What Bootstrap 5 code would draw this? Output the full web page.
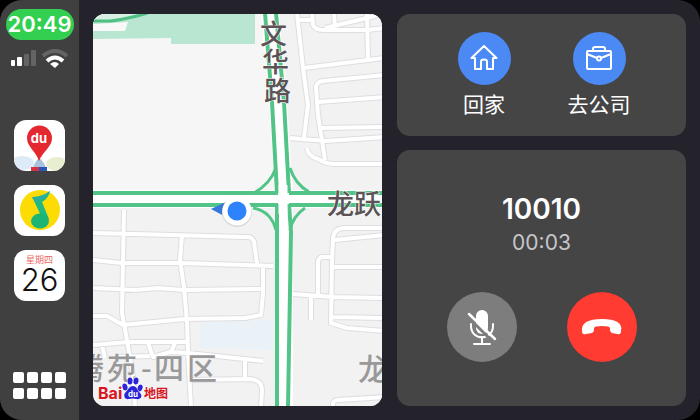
<!DOCTYPE html>
<html lang="zh-CN">
<head>
<meta charset="utf-8">
<meta name="viewport" content="width=device-width, initial-scale=1">
<title>CarPlay</title>
<link href="https://cdn.jsdelivr.net/npm/bootstrap@5.3.0/dist/css/bootstrap.min.css" rel="stylesheet">
<style>
  body { background: #000; font-family: Inter, "Noto Sans CJK SC", sans-serif; }
  .shell { background: #24232b; border-radius: 22px; overflow: hidden; }
  .dock { width: 79px; background: #404041; padding: 9px 0 21px; }
  .clock { width: 68px; height: 31px; border-radius: 16px; background: #32cf50; color: #fff; font-size: 22px; line-height: 31px; font-weight: 600; text-align: center; }
  .signals { height: 20px; margin-top: 5px; margin-bottom: 55px; }
  .apps { gap: 14px; }
  .app-tile { width: 51px; height: 51px; border-radius: 12px; background: #fff; overflow: hidden; }
  .app-tile svg { display: block; }
  .weekday { font-size: 9px; line-height: 12px; color: #ea6a67; padding-top: 4px; }
  .monthday { font-size: 31px; line-height: 28px; font-weight: 300; color: #111; }
  .deck { padding: 14px; gap: 15px; }
  .pane { flex: 1 1 0; min-width: 0; }
  .side { gap: 14px; }
  .map { border-radius: 12px; overflow: hidden; background: #f3f3f4; position: relative; }
  .map svg { position: absolute; inset: 0; width: 100%; height: 100%; }
  .map text { font-family: "Noto Sans CJK SC", sans-serif; }
  .panel { background: #454546; border-radius: 13px; color: #fff; }
  .places { padding: 18px 0; }
  .place { width: 115px; }
  .place-disc { width: 53px; height: 53px; background: #4b89f5; }
  .place-name { font-family: "Noto Sans CJK SC", sans-serif; font-size: 21px; line-height: 30px; margin-top: 3px; }
  .caller { font-size: 28px; line-height: 34px; font-weight: 600; margin-top: 42px; }
  .timer { font-size: 21px; line-height: 30px; color: #c6c6c7; margin-top: 2px; }
  .call-actions { gap: 50px; margin-top: 34px; }
  .round { width: 70px; height: 70px; }
  .mute { background: #7d7d7d; }
  .hangup { background: #ff3b32; }
</style>
<script src="https://cdn.jsdelivr.net/npm/bootstrap@5.3.0/dist/js/bootstrap.bundle.min.js"></script>
</head>
<body>
<div class="shell d-flex min-vh-100">
  <nav class="dock flex-shrink-0 d-flex flex-column align-items-center" aria-label="程序坞">
    <div class="clock">20:49</div>
    <div class="signals">
      <svg width="60" height="20" viewBox="10 45 60 20" aria-hidden="true">
        <g fill="#fff"><rect x="11" y="56" width="4" height="6" rx="1"/><rect x="17" y="53" width="5" height="9" rx="1"/></g>
        <g fill="#646465"><rect x="24" y="50" width="5" height="12" rx="1"/><rect x="31" y="46" width="5" height="16" rx="1"/></g>
        <g fill="none" stroke-width="4"><path d="M43 52Q55 42 67 52" stroke="#646465"/><path d="M47 57Q55 50 63 57" stroke="#fff"/></g>
        <path d="M50 60Q55 56 59 60L55 64Z" fill="#fff"/>
      </svg>
    </div>
    <div class="apps d-flex flex-column">
      <button type="button" class="app-tile btn border-0 p-0" aria-label="百度地图">
        <svg width="51" height="51" viewBox="0 0 51 51">
          <ellipse cx="8" cy="43" rx="12" ry="7" fill="#dcebf7"/><ellipse cx="43" cy="44" rx="11" ry="7" fill="#e8efd0"/>
          <path d="M25 38Q20 42 18 51H33Q31 42 25 38Z" fill="#a7c4dc"/>
          <path d="M17 47H25V51H17Z" fill="#d63145"/><path d="M25 47H33V51H25Z" fill="#2c56b5"/>
          <path d="M25 41C22 31 13 27 13 18A12.500 12.500 0 0 1 38 18C38 27 29 31 25 41Z" fill="#e32830"/>
          <text x="25" y="23" text-anchor="middle" font-size="13" font-weight="700" fill="#fff">du</text>
        </svg>
      </button>
      <button type="button" class="app-tile btn border-0 p-0" aria-label="QQ音乐">
        <svg width="51" height="51" viewBox="0 0 51 51">
          <circle cx="26" cy="25" r="20" fill="#fddc05"/>
          <path d="M18 12Q28 12 36 6Q35 13 28 17L35 34L30 37L20 16Z" fill="#20b883"/>
          <path d="M18 12Q28 12 36 6Q33 15 21 17Z" fill="#2cae9c"/>
          <ellipse cx="26" cy="36" rx="9" ry="7.500" fill="#1cb574"/>
        </svg>
      </button>
      <button type="button" class="app-tile btn border-0 p-0 d-flex flex-column align-items-center" aria-label="日历">
        <span class="weekday">星期四</span>
        <span class="monthday">26</span>
      </button>
    </div>
    <button type="button" class="btn border-0 p-0 mt-auto d-flex" aria-label="主屏幕">
      <svg width="53" height="27" viewBox="0 0 53 27" fill="#fff">
        <g id="dots"><rect width="11" height="11" rx="2"/><rect x="14" width="11" height="11" rx="2"/><rect x="28" width="11" height="11" rx="2"/><rect x="42" width="11" height="11" rx="2"/></g>
        <use href="#dots" y="16"/>
      </svg>
    </button>
  </nav>

  <main class="deck flex-grow-1 d-flex">
    <section class="pane map" aria-label="地图">
      <svg viewBox="93 14 289 392" preserveAspectRatio="xMidYMid slice">
        <defs>
          <path id="streets" d="M297 13L303 68L308 105L304 138M298 20H312M312 13L313 25Q315 30 323 30H367L384 28M325 28L367 18L384 13M334 13L335 28M367 13L368 60M304 68L384 58M384 75L323 81Q316 82 316 88L318 115L325 160M318 102L384 97M320 128L384 127M290 138L326 141L384 137M307 148Q308 156 318 159Q326 164 335 164H384
          M384 228H343Q334 229 333 238L332 260L331 323L347 328L384 331M334 240L384 235M332 257H322Q318 258 318 263V294M332 267H384M293 294L333 297L384 298M311 297V320M332 317L384 318M333 407Q332 400 338 400L384 397
          M92 233L135 234L245 237Q252 236 254 242L257 264M92 260L122 263H182L245 265L273 266M92 288L135 290L158 288L184 290L262 289M263 267V293L261 315L245 318L185 319L123 325L107 316H92M124 210L122 313L127 340L133 377L135 407M182 235L180 260L184 287L187 323L188 350L191 407M92 345L128 342H188M148 343L153 357L170 352L188 353L263 361M175 343L171 352M102 345L105 358M245 361V379M191 380L250 379Q262 380 262 390L261 407M118 357L150 356"/>
        </defs>
        <rect x="93" y="14" width="289" height="392" fill="#f2f2f3"/>
        <path d="M93 14H273L277 191H93Z" fill="#f6f6f6"/>
        <path d="M93 14H255V44H171V38L93 39Z" fill="#b9e6d0"/>
        <path d="M93 14H150L112 20H93Z" fill="#d9efe4"/>
        <path d="M93 24L128 22L125 31H93Z" fill="#f8f8f8"/>
        <path d="M92 21H110Q122 20 148 13" fill="none" stroke="#50c084" stroke-width="3"/>
        <path d="M200 322L263 320L273 318V350L200 348Z" fill="#eaf2f8"/>
        <g fill="none" stroke-linejoin="round">
          <use href="#streets" stroke="#dedee0" stroke-width="6"/>
          <use href="#streets" stroke="#fff" stroke-width="4"/>
          <path d="M270 13L278 102L284 193V407" stroke="#fff" stroke-width="18"/>
          <path d="M92 199H383" stroke="#fff" stroke-width="18"/>
          <g stroke="#53c487" stroke-width="3">
            <path d="M276 168Q270 184 254 193M290 168Q295 184 309 192M253 208Q271 211 276 230M305 208Q293 216 290 230"/>
            <g stroke-width="4"><path d="M265 13L272 102L277 193M276 13L284 102L289 193M92 193H278M289 193H383M92 205H278M289 205H383M277 204V407M289 204L291 232L288 407"/></g>
          </g>
          <path d="M283 185V214" stroke="#fff" stroke-width="9"/>
        </g>
        <g fill="#5b5355" stroke="#fff" stroke-width="1" paint-order="stroke" font-size="27" font-weight="500">
          <text x="260" y="44">文</text><text x="262" y="72">华</text><text x="264" y="101">路</text>
          <text x="327" y="214">龙跃</text>
        </g>
        <g fill="#999" font-size="30" font-weight="500">
          <text x="74 107 141 154 187" y="379">腾苑-四区</text>
          <text x="358" y="380">龙</text>
        </g>
        <path d="M211 209L226 202V217Z" fill="#3577db"/>
        <circle cx="237" cy="212" r="15" fill="#d5d5d8"/>
        <circle cx="237" cy="211" r="14.500" fill="#fff"/>
        <circle cx="237" cy="211" r="9.500" fill="#2f83fa"/>
        <g fill="#d8161d">
          <text x="98" y="399" font-size="16" font-weight="700" style="font-family:Inter,sans-serif">Bai</text>
          <text x="144" y="398" font-size="12" font-weight="700">地图</text>
        </g>
        <g fill="#2a24d8" stroke="#fff" stroke-width="1" paint-order="stroke">
          <ellipse cx="125" cy="387" rx="2.500" ry="3.500" transform="rotate(-15 125 387)"/><ellipse cx="130" cy="381" rx="2.500" ry="3.500"/><ellipse cx="136" cy="381" rx="2.500" ry="3.500" transform="rotate(10 136 381)"/><ellipse cx="140" cy="388" rx="2.500" ry="3.500" transform="rotate(20 140 388)"/>
          <path d="M133 386C129 386 128 390 125 393C123 396 125 400 129 399Q133 398 136 399C141 400 143 396 140 393C137 390 137 386 133 386Z"/>
        </g>
        <text x="133" y="397" text-anchor="middle" font-size="8" font-weight="700" fill="#fff">du</text>
      </svg>
    </section>

    <div class="pane side d-flex flex-column">
      <section class="panel places d-flex justify-content-center">
        <button type="button" class="place btn border-0 p-0 text-white d-flex flex-column align-items-center">
          <span class="place-disc rounded-circle d-flex align-items-center justify-content-center">
            <svg width="30" height="30" viewBox="0 0 30 30" fill="none" stroke="#fff" stroke-width="2" stroke-linejoin="round"><path d="M15 2L2.500 14H6V25H12V17.500Q12 15.500 15 15.500T18 17.500V25H24V14H27.500Z"/></svg>
          </span>
          <span class="place-name">回家</span>
        </button>
        <button type="button" class="place btn border-0 p-0 text-white d-flex flex-column align-items-center">
          <span class="place-disc rounded-circle d-flex align-items-center justify-content-center">
            <svg width="30" height="30" viewBox="0 0 30 30" fill="none" stroke="#fff" stroke-width="2" stroke-linejoin="round"><rect x="3" y="7" width="24" height="18" rx="1"/><path d="M9 7V5Q9 3 11 3H19Q21 3 21 5V7M3 10L13 14M27 10L17 14"/><circle cx="15" cy="14.500" r="2"/></svg>
          </span>
          <span class="place-name">去公司</span>
        </button>
      </section>
      <section class="panel flex-grow-1 d-flex flex-column align-items-center">
        <div class="caller">10010</div>
        <div class="timer">00:03</div>
        <div class="call-actions d-flex">
          <button type="button" class="round mute btn border-0 p-0 rounded-circle" aria-label="静音">
            <svg class="d-block" width="70" height="70" viewBox="0 0 70 70" fill="none" stroke-linecap="round">
              <rect x="29" y="18" width="12" height="24" rx="6" fill="#fff"/>
              <path d="M24 32V34C24 49 46 49 46 34V32M35 45V52M27 52H43" stroke="#fff" stroke-width="2"/>
              <path d="M20 24L46 50" stroke="#7d7d7d" stroke-width="3"/>
              <path d="M22 22L48 47" stroke="#fff" stroke-width="2.500"/>
            </svg>
          </button>
          <button type="button" class="round hangup btn border-0 p-0 rounded-circle" aria-label="挂断">
            <svg class="d-block" width="70" height="70" viewBox="0 0 70 70" fill="#fff">
              <path d="M15 39C14 31 21 27 35 27S56 31 54 39Q54 43 50 42L45 41Q43 40 43 38V36Q43 35 41 34.500Q35 33.500 29 34.500Q27 35 27 36V38Q27 40 25 41L19 42Q15 43 15 39Z"/>
            </svg>
          </button>
        </div>
      </section>
    </div>
  </main>
</div>
</body>
</html>
